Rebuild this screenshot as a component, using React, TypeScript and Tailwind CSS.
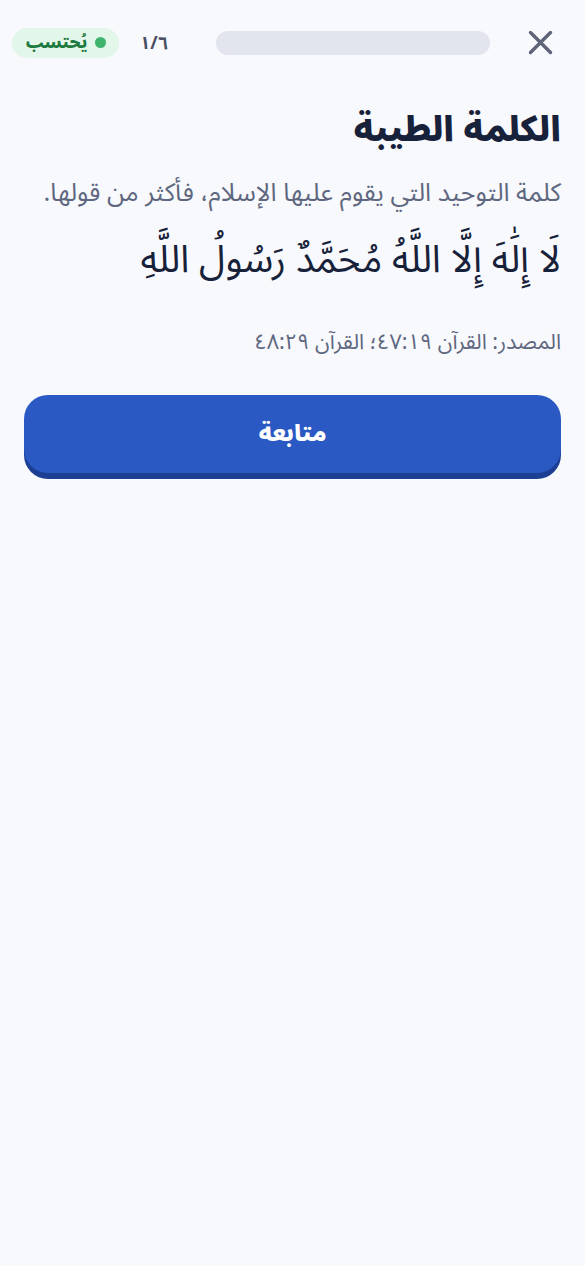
import React from "react";

export default function App() {
  return (
    <div
      dir="rtl"
      className="min-h-[1266px] w-full bg-[#f7f9fc]"
      style={{ fontFamily: '"Noto Sans Arabic", "Noto Sans Arabic UI", "Noto Sans", sans-serif' }}
    >
      <div className="flex items-center pt-[28px] pr-[32px] pl-[12px] h-[29px] box-content">
        <button className="w-[25px] h-[25px] flex items-center justify-center text-[#5e6377]">
          <svg width="25" height="25" viewBox="0 0 25 25" fill="none" stroke="currentColor" strokeWidth="3.4" strokeLinecap="round">
            <path d="M2.5 2.5L22.5 22.5M22.5 2.5L2.5 22.5" />
          </svg>
        </button>
        <div className="flex-1 h-[24px] rounded-full bg-[#e2e5ee] mr-[38px]" />
        <div className="w-[30px] mr-[47px] text-[18px] font-bold text-[#4a4f63] text-center leading-none">١/٦</div>
        <div className="mr-[20px] h-[30px] w-[107px] rounded-full bg-[#e3f6ea] flex items-center justify-center gap-[7px]">
          <span className="w-[11px] h-[11px] rounded-full bg-[#3fb46d]" />
          <span className="text-[16px] font-black text-[#1d7a3e] leading-none">يُحتسب</span>
        </div>
      </div>

      <div className="px-6">
        <h1 className="mt-[51px] text-[34.5px] font-black text-[#17213a] leading-[44px]">الكلمة الطيبة</h1>
        <p className="mt-[23px] text-[25.3px] text-[#5f6780] leading-[36px]">
          كلمة التوحيد التي يقوم عليها الإسلام، فأكثر من قولها.
        </p>
        <p className="mt-[21px] text-[38px] text-[#17213a] leading-[56px]">
          لَا إِلَٰهَ إِلَّا اللَّهُ مُحَمَّدٌ رَسُولُ اللَّهِ
        </p>
        <p className="mt-[38px] text-[21.5px] text-[#5f6780] leading-[32px]">
          المصدر: القرآن ٤٧:١٩؛ القرآن ٤٨:٢٩
        </p>
        <button className="mt-[37px] w-full h-[78px] rounded-[24px] bg-[#2b59c3] shadow-[0_6px_0_#1d3f93] text-white text-[23px] font-black">
          متابعة
        </button>
      </div>
    </div>
  );
}
